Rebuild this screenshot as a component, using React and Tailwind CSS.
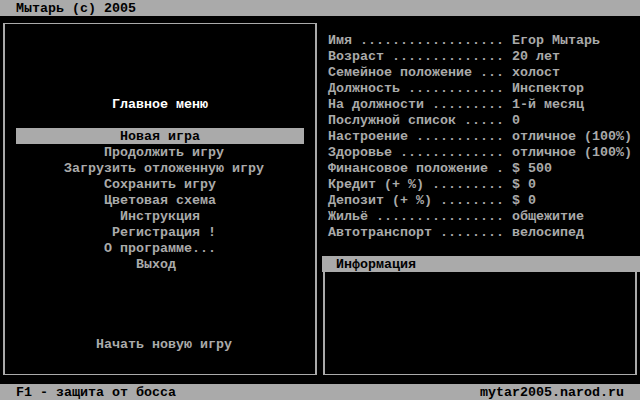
import React from "react"

const stats = [
  ['Имя', 'Егор Мытарь'],
  ['Возраст', '20 лет'],
  ['Семейное положение', 'холост'],
  ['Должность', 'Инспектор'],
  ['На должности', '1-й месяц'],
  ['Послужной список', '0'],
  ['Настроение', 'отличное (100%)'],
  ['Здоровье', 'отличное (100%)'],
  ['Финансовое положение', '$ 500'],
  ['Кредит (+ %)', '$ 0'],
  ['Депозит (+ %)', '$ 0'],
  ['Жильё', 'общежитие'],
  ['Автотранспорт', 'велосипед'],
]

// odd-length lines get a pad so they land on the 8px grid like the DOS original
const menu = [
  'Новая игра',
  ' Продолжить игру',
  ' Загрузить отложенную игру',
  'Сохранить игру',
  'Цветовая схема',
  'Инструкция',
  ' Регистрация !',
  'О программе...',
  'Выход ',
]

const dotted = (label) => {
  const s = label + ' '
  return s + '.'.repeat(Math.max(1, 22 - s.length))
}

export default function App() {
  return (
    <div className="w-[640px] h-[400px] bg-black flex flex-col text-[#aaaaaa] font-bold whitespace-pre text-[13.333px] leading-[18px] overflow-hidden" style={{ fontFamily: '"Liberation Mono", "DejaVu Sans Mono", monospace' }}>
      <div className="h-4 bg-[#aaaaaa] text-black pl-4 overflow-hidden">Мытарь (c) 2005</div>

      <div className="flex-1 flex">
        <div className="w-[320px] flex flex-col">
          <div className="flex-1 mt-[7px] mb-[9px] mx-[3px] border-x-2 border-y border-[#aaaaaa] flex flex-col items-stretch">
            <div className="mt-[72px] h-4 text-center text-white">Главное меню</div>
            <div className="mt-4 flex flex-col">
              {menu.map((item, i) => (
                <div key={i} className={i === 0 ? 'mx-[11px] bg-[#aaaaaa] text-black text-center h-4 overflow-hidden' : 'text-center h-4'}>{item}</div>
              ))}
            </div>
            <div className="mt-16 h-4 text-center"> Начать новую игру</div>
          </div>
        </div>

        <div className="w-[320px] flex flex-col">
          <div className="pt-4 pl-2">
            {stats.map(([label, value]) => (
              <div key={label} className="h-4">{dotted(label)} {value}</div>
            ))}
          </div>
          <div className="mt-4 ml-[2px] h-4 bg-[#aaaaaa] text-black pl-[14px] overflow-hidden">Информация</div>
          <div className="flex-1 mb-[9px] mx-[3px] border-x-2 border-b border-[#aaaaaa]"></div>
        </div>
      </div>

      <div className="h-4 bg-[#aaaaaa] text-black px-4 flex justify-between overflow-hidden">
        <span>F1 - защита от босса</span>
        <span>mytar2005.narod.ru</span>
      </div>
    </div>
  )
}
